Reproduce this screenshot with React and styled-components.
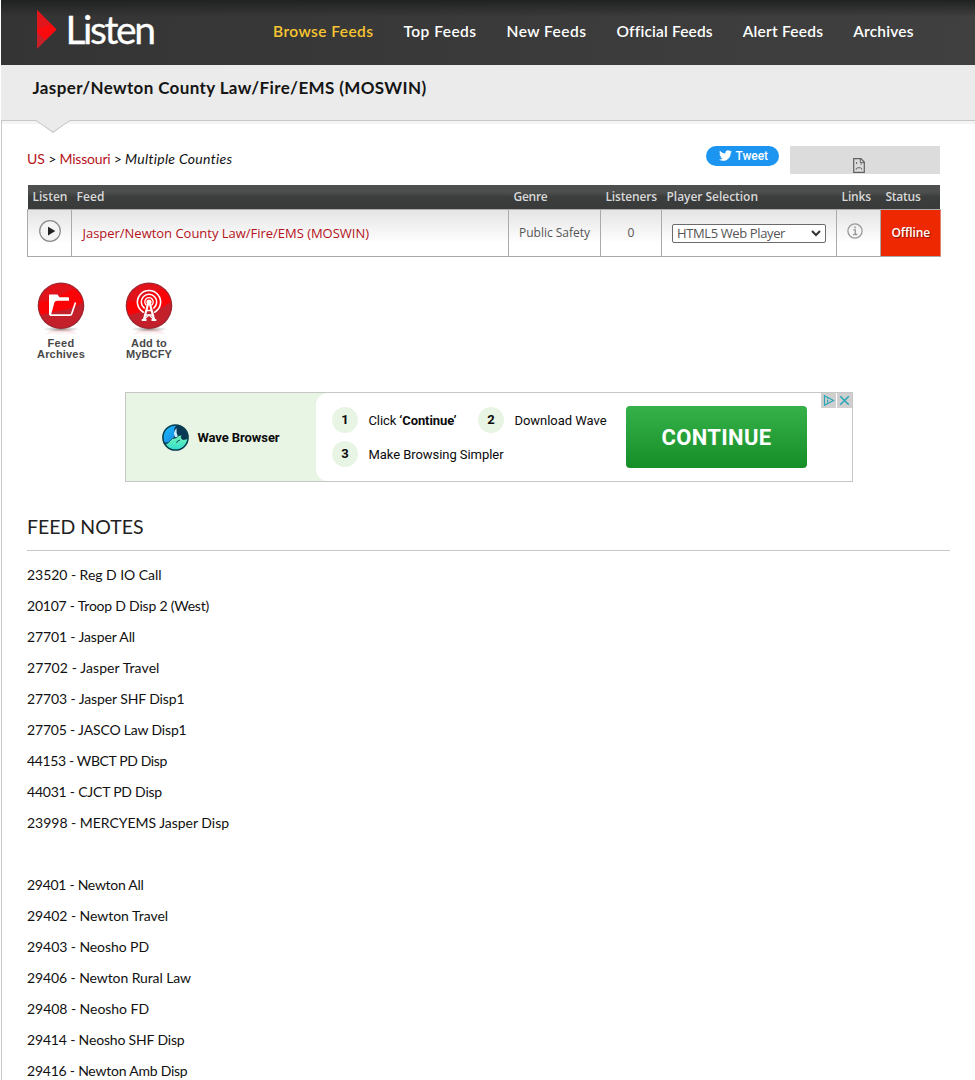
import { useLayoutEffect, useRef, useState } from "react";
import styled, { createGlobalStyle } from "styled-components";
import { FaTwitter } from "react-icons/fa";

const GlobalStyle = createGlobalStyle`
  * {
    box-sizing: border-box;
  }

  body {
    margin: 0;
    height: 1080px;
    overflow: hidden;
    background: #fff;
    color: #111;
    font-family: Lato, "Liberation Sans", sans-serif;
    font-size: 14px;
  }
`;

const FitSpan = styled.span`
  display: inline-block;
  white-space: pre;
  flex: none;
`;

const Page = styled.div`
  height: 1080px;
  padding-left: 1px;
  overflow: hidden;
`;

const Header = styled.header`
  display: flex;
  height: 65px;
  background:
    linear-gradient(to bottom, #202121 0, rgba(36, 37, 37, 0.6) 8px, rgba(50, 50, 50, 0) 17px),
    linear-gradient(to right, #343434, #3f403f);
`;

const Logo = styled.a`
  display: flex;
  width: 272px;
  padding-left: 36px;
`;

const LogoMark = styled.svg`
  margin-top: 10px;
  flex: none;
`;

const LogoText = styled.span`
  margin: 8px 0 0 8.5px;
  color: #fff;
  font-size: 39px;
  line-height: 42px;
  -webkit-text-stroke: 0.3px #fff;
`;

const Nav = styled.nav`
  display: flex;
  gap: 30px;
  padding-top: 21px;
`;

const NavLink = styled.a`
  display: flex;
  color: ${({ $active }) => ($active ? "#f7c531" : "#fff")};
  font-size: 15.5px;
  font-weight: 600;
  line-height: 21px;
`;

const TitleBar = styled.div`
  height: 55px;
  padding: 12px 0 0 31.5px;
  background: #ebebeb;
`;

const Title = styled.h1`
  margin: 0;
  color: #151515;
  font-size: 17px;
  font-weight: 700;
  line-height: 22px;
`;

const Content = styled.main`
  position: relative;
  height: 960px;
  padding: 24px 24px 0 25px;
  border-top: 1px solid #c8c8c8;
  border-left: 1px solid #c8c8c8;
  box-shadow: inset 0 3px 0 #f4f4f4;
`;

const Notch = styled.svg`
  position: absolute;
  top: -1px;
  left: 33px;
`;

const TopRow = styled.div`
  display: flex;
  height: 40px;
`;

const Crumbs = styled.div`
  display: flex;
  flex: 1;
  margin-top: 5px;
  line-height: 18px;
`;

const RedLink = styled.a`
  color: #b5121b;
`;

const TweetButton = styled.a`
  display: flex;
  align-items: center;
  gap: 4px;
  width: 73px;
  height: 20px;
  margin: 1px 11px 0 0;
  padding: 0 0 1px 12.5px;
  border-radius: 10px;
  background: #1b95f0;
  color: #fff;
  font: 500 12px Roboto, "Liberation Sans", sans-serif;
`;

const BrokenFrame = styled.div`
  display: flex;
  width: 150px;
  height: 28px;
  margin: 1px 11px 0 0;
  padding: 12px 0 0 63px;
  background: #dcdcdc;
`;

const columns = "44px 437px 92px 61px 175px 44px 61px";

const Table = styled.div`
  width: 914px;
  font-family: "Open Sans", "Noto Sans", sans-serif;
`;

const HeadRow = styled.div`
  display: grid;
  grid-template-columns: ${columns};
  height: 24px;
  margin: 0 1px;
  background: linear-gradient(#4c4f4e 0, #4c4f4e 7px, #3b3e3d 12px, #383b3a 100%);
  color: #d8d8d8;
  font-size: 12px;
  font-weight: 600;
  line-height: 24px;
`;

const HeadCell = styled.div`
  padding-left: 4.5px;
`;

const FeedRow = styled.div`
  display: grid;
  grid-template-columns: ${columns};
  height: 48px;
  border-top: 1px solid #aeaeae;
  border-bottom: 1px solid #aaa;
  background: linear-gradient(#e4e4e4 0, #fff 72%);
`;

const Cell = styled.div`
  display: flex;
  align-items: center;
  justify-content: ${({ $center }) => ($center ? "center" : "flex-start")};
  padding-left: ${({ $pad = 0 }) => $pad}px;
  padding-bottom: ${({ $lift = 0 }) => $lift}px;
  border-left: 1px solid #aaa;
  color: #555;
  font-size: ${({ $size = 12 }) => $size}px;
`;

const StatusCell = styled(Cell)`
  border-right: 1px solid #e08070;
  background: #ee2800;
  color: #fff;
  font-weight: 600;
  text-shadow: 1px 1px 1px #8a1500;
`;

const PlayerSelect = styled.div`
  display: flex;
  align-items: center;
  justify-content: space-between;
  width: 154px;
  height: 19px;
  padding: 0 4px;
  border: 1px solid #6b6b6b;
  border-radius: 2px;
  background: #fff;
  color: #555;
  font-size: 13px;
  line-height: 17px;
`;

const Actions = styled.div`
  display: flex;
  gap: 20px;
  height: 135px;
  padding-top: 23px;
`;

const Action = styled.a`
  display: flex;
  flex-direction: column;
  align-items: center;
  width: 68px;
  color: #484848;
  font: bold 11px/11px "Liberation Sans", Arial, sans-serif;
`;

const ActionIcon = styled.svg`
  flex: none;
  margin-bottom: 2px;
`;

const Ad = styled.aside`
  position: relative;
  display: flex;
  width: 728px;
  height: 90px;
  margin-left: 98px;
  border: 1px solid #c6c6c6;
  background: #e8f5e4;
  color: #0b0b0b;
  font-family: Roboto, sans-serif;
  font-size: 13px;
`;

const AdBrand = styled.div`
  display: flex;
  align-items: center;
  gap: 8.5px;
  width: 190px;
  padding-left: 36px;
  font-weight: 700;
`;

const AdBody = styled.div`
  display: flex;
  flex: 1;
  border-radius: 12px 0 0 12px;
  background: #fff;
`;

const Steps = styled.div`
  display: flex;
  flex-direction: column;
  gap: 8px;
  width: 294px;
  padding: 14px 0 0 16px;
  flex: none;
`;

const StepRow = styled.div`
  display: flex;
`;

const Step = styled.div`
  display: flex;
  align-items: center;
  gap: 10.5px;
  width: ${({ $width }) => $width}px;
  height: 26px;
  flex: none;
`;

const StepNumber = styled.span`
  flex: none;
  width: 26px;
  border-radius: 50%;
  background: #e8f5e4;
  font-weight: 700;
  line-height: 26px;
  text-align: center;
`;

const ContinueButton = styled.a`
  display: flex;
  align-items: center;
  justify-content: center;
  width: 181px;
  height: 62px;
  margin: 13px 0 0 16px;
  border-radius: 4px;
  background: linear-gradient(#36b14a, #168e27);
  color: #fff;
  font-size: 22px;
  font-weight: 700;
`;

const AdChoices = styled.div`
  position: absolute;
  top: 0;
  right: 0;
  display: flex;
  gap: 1px;
`;

const AdChoice = styled.svg`
  display: block;
  background: #cfcfcf;
`;

const NotesTitle = styled.h2`
  width: 923px;
  height: 69px;
  margin: 0 0 8px;
  padding-top: 33px;
  border-bottom: 1px solid #c8c8c8;
  color: #222;
  font-size: 19.5px;
  font-weight: 400;
  line-height: 24px;
`;

const Note = styled.p`
  height: 31px;
  margin: 0;
  line-height: 31px;
`;

// spreads the letters so a label takes exactly the given width
function Fit({ width, children }) {
  const ref = useRef(null);
  const [spacing, setSpacing] = useState(0);

  useLayoutEffect(() => {
    const el = ref.current;
    const natural = el.getBoundingClientRect().width;
    setSpacing((width - natural) / el.textContent.length);
  }, [width]);

  return (
    <FitSpan ref={ref} style={{ letterSpacing: spacing }}>
      {children}
    </FitSpan>
  );
}

const navItems = [
  ["Browse Feeds", 100.5],
  ["Top Feeds", 73],
  ["New Feeds", 80],
  ["Official Feeds", 95.5],
  ["Alert Feeds", 80.5],
  ["Archives", 60.5],
];

const headings = [
  ["Listen", 35],
  ["Feed", 28],
  ["Genre", 34],
  ["Listeners", 51.5],
  ["Player Selection", 91.5],
  ["Links", 29.5],
  ["Status", 35],
];

const notes = [
  ["23520 - Reg D IO Call", 134.5],
  ["20107 - Troop D Disp 2 (West)", 182],
  ["27701 - Jasper All", 108],
  ["27702 - Jasper Travel", 132.5],
  ["27703 - Jasper SHF Disp1", 157.5],
  ["27705 - JASCO Law Disp1", 159.5],
  ["44153 - WBCT PD Disp", 140],
  ["44031 - CJCT PD Disp", 135],
  ["23998 - MERCYEMS Jasper Disp", 202],
  null,
  ["29401 - Newton All", 116.5],
  ["29402 - Newton Travel", 141],
  ["29403 - Neosho PD", 122],
  ["29406 - Newton Rural Law", 164],
  ["29408 - Neosho FD", 122],
  ["29414 - Neosho SHF Disp", 157.5],
  ["29416 - Newton Amb Disp", 160.5],
];

function PlayIcon() {
  return (
    <svg width="24" height="24" viewBox="0 0 24 24">
      <circle cx="12" cy="12" r="10.3" fill="#f4f4f4" stroke="#8c8c8c" strokeWidth="1.2" />
      <path d="M10 7.8v8.6l7.3-4.3z" fill="#222" />
    </svg>
  );
}

function InfoIcon() {
  return (
    <svg width="16" height="16" viewBox="0 0 16 16" fill="none" stroke="#999" strokeWidth="1.3">
      <circle cx="8" cy="8" r="7.1" />
      <path d="M6.3 6.8h2v4.6M6 11.5h4.4" />
      <path d="M7.3 4.4h1.5" strokeWidth="1.6" />
    </svg>
  );
}

function SadFileIcon() {
  return (
    <svg width="12" height="15" viewBox="0 0 12 15" fill="none" stroke="#606060">
      <path d="M.7.6h7.2l3.4 3.5v10.2H.7z" strokeWidth="1.2" />
      <path d="M7.3.8v3.8h3.8M3.6 4v2M7.5 6h1.4M3.2 11.7v-1l1.2-.9h3.2l1.2.9v1" />
    </svg>
  );
}

function RedBadge({ id, children }) {
  return (
    <ActionIcon width="56" height="56" viewBox="0 0 56 56">
      <defs>
        <radialGradient id={`${id}-shadow`}>
          <stop offset="0" stopColor="#777" stopOpacity="0.8" />
          <stop offset="1" stopColor="#999" stopOpacity="0" />
        </radialGradient>
        <linearGradient id={`${id}-reflection`} x1="0" y1="0" x2="0" y2="1">
          <stop offset="0" stopColor="#e98a90" stopOpacity="0.55" />
          <stop offset="1" stopColor="#fff" stopOpacity="0" />
        </linearGradient>
        <clipPath id={`${id}-clip`}>
          <circle cx="28" cy="25.7" r="22" />
        </clipPath>
      </defs>
      <path d="M10 56q4-6 18-6.5t18 6.5z" fill={`url(#${id}-reflection)`} />
      <ellipse cx="28" cy="49.2" rx="19" ry="2.5" fill={`url(#${id}-shadow)`} />
      <circle cx="28" cy="25.7" r="23.3" fill="#9c2630" />
      <g clipPath={`url(#${id}-clip)`}>
        <path d="M0 0h56v56H0z" fill="#c3202b" />
        <path d="M0 0h56v18Q44 28 30 30T0 38z" fill="#e2121a" />
        <path d="M4 22Q18 22 30 14t24-3v7Q44 28 30 30T4 36z" fill="#fa0307" />
      </g>
      {children}
    </ActionIcon>
  );
}

function WaveLogo() {
  return (
    <svg width="27" height="27" viewBox="0 0 27 27">
      <defs>
        <clipPath id="wave-clip">
          <circle cx="13.5" cy="13.5" r="12.5" />
        </clipPath>
        <linearGradient id="wave-blue" x1="0" y1="0" x2="1" y2="1">
          <stop offset="0" stopColor="#1bc4ff" />
          <stop offset="1" stopColor="#1680e0" />
        </linearGradient>
        <linearGradient id="wave-green" x1="0.5" y1="0" x2="0.5" y2="1">
          <stop offset="0" stopColor="#78f5b4" />
          <stop offset="1" stopColor="#25d9d3" />
        </linearGradient>
      </defs>
      <g clipPath="url(#wave-clip)">
        <path d="M0 0h27v27H0z" fill="#083a55" />
        <path d="M0 0h18Q11 2 12.500 8q.5 6-3.500 9-4 2.500-9 1z" fill="url(#wave-blue)" />
        <path d="M14.500 4Q10.500 8.500 13 13q1.500 1 3-.5-2-3.500-1.500-8.500z" fill="#c9ecff" />
        <path
          d="M-1 20.500q6 .5 9-3.500 2-3.500 6-3 3-3.500 6-3-2 3 .5 4.500 3 .5 7-2v15H-1z"
          fill="url(#wave-green)"
          stroke="#083a55"
          strokeWidth="0.7"
        />
        <path d="M14.500 19q.5-2.500 3.500-3" fill="none" stroke="#083a55" strokeWidth="0.9" />
      </g>
      <circle cx="13.5" cy="13.5" r="12.6" fill="none" stroke="#073b4c" strokeWidth="1.5" />
    </svg>
  );
}

function App() {
  return (
    <Page>
      <GlobalStyle />
      <Header>
        <Logo>
          <LogoMark width="20" height="39" viewBox="0 0 20 39">
            <path d="M0 0l19.5 19.5L0 39z" fill="#c8202a" />
            <path d="M0 9l13 4 6.5 6.5-11 10.5L0 22z" fill="#fa0a0c" />
            <path d="M0 0l14 14L0 20z" fill="#e0161b" />
          </LogoMark>
          <LogoText>
            <Fit width={88}>Listen</Fit>
          </LogoText>
        </Logo>
        <Nav>
          {navItems.map(([label, width], i) => (
            <NavLink key={label} $active={i === 0}>
              <Fit width={width}>{label}</Fit>
            </NavLink>
          ))}
        </Nav>
      </Header>
      <TitleBar>
        <Title>
          <Fit width={394}>Jasper/Newton County Law/Fire/EMS (MOSWIN)</Fit>
        </Title>
      </TitleBar>
      <Content>
        <Notch width="36" height="15" viewBox="0 0 36 15">
          <path d="M1 0l17 13.5L35 0z" fill="#dedede" />
          <path d="M1 0l17 12L35 0z" fill="#ebebeb" />
          <path d="M1 .5l17 11.5L35 .5" fill="none" stroke="#c8c8c8" />
        </Notch>
        <TopRow>
          <Crumbs>
            <RedLink>
              <Fit width={18}>US</Fit>
            </RedLink>
            <Fit width={14.5}>{" > "}</Fit>
            <RedLink>
              <Fit width={51}>Missouri</Fit>
            </RedLink>
            <Fit width={14.5}>{" > "}</Fit>
            <em>
              <Fit width={107}>Multiple Counties</Fit>
            </em>
          </Crumbs>
          <TweetButton>
            <FaTwitter size={13} />
            <Fit width={32.5}>Tweet</Fit>
          </TweetButton>
          <BrokenFrame>
            <SadFileIcon />
          </BrokenFrame>
        </TopRow>
        <Table>
          <HeadRow>
            {headings.map(([label, width]) => (
              <HeadCell key={label}>
                <Fit width={width}>{label}</Fit>
              </HeadCell>
            ))}
          </HeadRow>
          <FeedRow>
            <Cell $center $lift={4}>
              <PlayIcon />
            </Cell>
            <Cell $pad={10.5} $size={13}>
              <RedLink>
                <Fit width={286.5}>Jasper/Newton County Law/Fire/EMS (MOSWIN)</Fit>
              </RedLink>
            </Cell>
            <Cell $pad={10} $lift={1}>
              <Fit width={71}>Public Safety</Fit>
            </Cell>
            <Cell $center $lift={1}>
              0
            </Cell>
            <Cell $pad={10}>
              <PlayerSelect>
                <Fit width={108}>HTML5 Web Player</Fit>
                <svg width="10" height="7" viewBox="0 0 10 7" fill="none" stroke="#333" strokeWidth="2">
                  <path d="M1 1l4 4 4-4" />
                </svg>
              </PlayerSelect>
            </Cell>
            <Cell $pad={10} $lift={4}>
              <InfoIcon />
            </Cell>
            <StatusCell $pad={10.5} $lift={1}>
              <Fit width={38.5}>Offline</Fit>
            </StatusCell>
          </FeedRow>
        </Table>
        <Actions>
          <Action>
            <RedBadge id="archives">
              <path
                d="M16.500 14.500H24.500l2 2.800H35q1 0 1 1v2.500H24q-2 0-2.600 1.700L18 35h-2V15q0-.5.5-.5z"
                fill="#fff"
              />
              <path
                d="M16.800 35.200H37q1.200 0 1.600-1.200L42.500 22.500"
                fill="none"
                stroke="#fff"
                strokeWidth="1.7"
              />
            </RedBadge>
            <Fit width={27}>Feed</Fit>
            <Fit width={48}>Archives</Fit>
          </Action>
          <Action>
            <RedBadge id="add">
              <g fill="none" stroke="#fff" strokeWidth="1.6" strokeLinecap="round">
                <path d="M22.400 32.200a11.600 11.600 0 1 1 11.200 0" />
                <path d="M23.200 28a7.700 7.700 0 1 1 9.600 0" />
                <path d="M25.200 25a4.200 4.200 0 1 1 5.600 0" strokeWidth="1.3" />
              </g>
              <circle cx="28" cy="22" r="2.6" fill="#fff" />
              <g fill="none" stroke="#fff" strokeWidth="1.8">
                <path d="M27.300 23L22.800 40M28.700 23L33.200 40" strokeWidth="2.2" />
                <path d="M25.500 30.500h5M24.500 35l7 0" strokeWidth="1.3" />
                <path d="M23.500 39l4.500-4 4.500 4" strokeWidth="1.2" />
                <path d="M20.700 40h4.800M30.500 40h4.800" />
              </g>
            </RedBadge>
            <Fit width={36}>Add to</Fit>
            <Fit width={46}>MyBCFY</Fit>
          </Action>
        </Actions>
        <Ad>
          <AdBrand>
            <WaveLogo />
            <Fit width={82}>Wave Browser</Fit>
          </AdBrand>
          <AdBody>
            <Steps>
              <StepRow>
                <Step $width={146}>
                  <StepNumber>1</StepNumber>
                  <Fit width={88}>
                    Click <b>‘Continue’</b>
                  </Fit>
                </Step>
                <Step $width={130}>
                  <StepNumber>2</StepNumber>
                  <Fit width={92}>Download Wave</Fit>
                </Step>
              </StepRow>
              <Step $width={180}>
                <StepNumber>3</StepNumber>
                <Fit width={135}>Make Browsing Simpler</Fit>
              </Step>
            </Steps>
            <ContinueButton>
              <Fit width={110}>CONTINUE</Fit>
            </ContinueButton>
          </AdBody>
          <AdChoices>
            <AdChoice width="15" height="15" viewBox="0 0 15 15" fill="none" stroke="#27a6b8">
              <path d="M3.5 2.8v9.4L12.5 7.5z" strokeWidth="1.2" />
              <path d="M6.7 6.8v3M6.7 4.8v1" strokeWidth="1.2" />
            </AdChoice>
            <AdChoice width="15" height="15" viewBox="0 0 15 15" stroke="#27a6b8" strokeWidth="1.5">
              <path d="M3.2 3.2l8.6 8.6M11.8 3.2l-8.6 8.6" />
            </AdChoice>
          </AdChoices>
        </Ad>
        <NotesTitle>
          <Fit width={116.5}>FEED NOTES</Fit>
        </NotesTitle>
        {notes.map((note, i) => (
          <Note key={i}>{note && <Fit width={note[1]}>{note[0]}</Fit>}</Note>
        ))}
      </Content>
    </Page>
  );
}

export default App;
